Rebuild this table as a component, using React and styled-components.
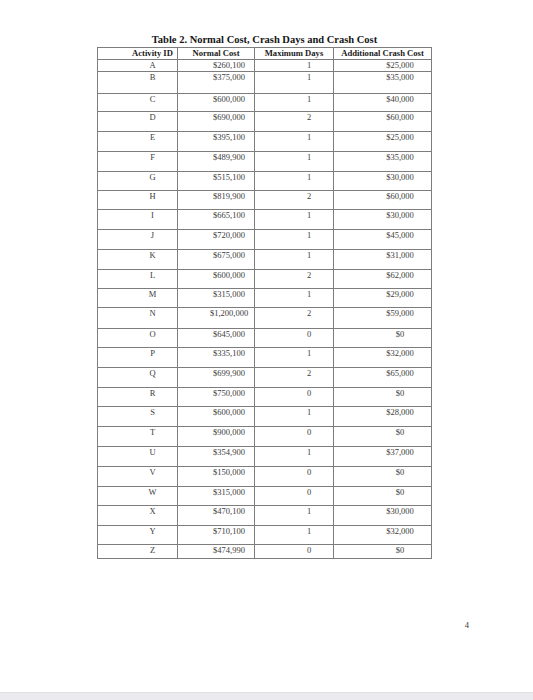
import React from "react";
import styled, { createGlobalStyle } from "styled-components";

const Global = createGlobalStyle`
  html, body { margin: 0; padding: 0; background: #ffffff; }
  #root { width: 533px; }
`;

const Page = styled.div`
  width: 533px;
  min-height: 700px;
  display: flex;
  flex-direction: column;
  background: #ffffff;
  font-family: "Liberation Serif", "Times New Roman", serif;
`;

const Doc = styled.div`
  padding-top: 34px;
  padding-left: 97px;
  width: 335px;
`;

const Title = styled.div`
  text-align: center;
  font-weight: bold;
  font-size: 10.5px;
  line-height: 12px;
  height: 13px;
  color: #151515;
  white-space: nowrap;
`;

const Table = styled.div`
  width: 335px;
  box-sizing: border-box;
  border-left: 1px solid #7d7d7d;
  border-right: 1px solid #7d7d7d;
  border-bottom: 1px solid #7d7d7d;
`;

const Row = styled.div`
  display: grid;
  grid-template-columns: 80px 77px 79px 97px;
  box-sizing: border-box;
  height: ${(p) => p.$h}px;
  border-top: 1px solid #7d7d7d;
`;

const Cell = styled.div`
  box-sizing: border-box;
  border-right: ${(p) => (p.$last ? "none" : "1px solid #7d7d7d")};
  padding-left: ${(p) => p.$pad || 0}px;
  text-align: center;
  white-space: nowrap;
  overflow: visible;
  font-size: ${(p) => (p.$head ? "8.6px" : "8.5px")};
  font-weight: ${(p) => (p.$head ? "bold" : "normal")};
  color: ${(p) => (p.$head ? "#1a1a1a" : "#3c3c3c")};
  line-height: 11px;
`;

const PageNum = styled.div`
  margin-top: 61px;
  padding-right: 64px;
  text-align: right;
  font-size: 8.5px;
  line-height: 10px;
  color: #3a3a3a;
`;

const Spacer = styled.div`
  flex: 1;
`;

const BottomBar = styled.div`
  height: 7px;
  background: #ebebef;
  border-top: 1px solid #dedee2;
`;

const rows = [
  ["A", "$260,100", "1", "$25,000", 12],
  ["B", "$375,000", "1", "$35,000", 22],
  ["C", "$600,000", "1", "$40,000", 18],
  ["D", "$690,000", "2", "$60,000", 20],
  ["E", "$395,100", "1", "$25,000", 20],
  ["F", "$489,900", "1", "$35,000", 20],
  ["G", "$515,100", "1", "$30,000", 19],
  ["H", "$819,900", "2", "$60,000", 19],
  ["I", "$665,100", "1", "$30,000", 20],
  ["J", "$720,000", "1", "$45,000", 20],
  ["K", "$675,000", "1", "$31,000", 20],
  ["L", "$600,000", "2", "$62,000", 19],
  ["M", "$315,000", "1", "$29,000", 19],
  ["N", "$1,200,000", "2", "$59,000", 21],
  ["O", "$645,000", "0", "$0", 19],
  ["P", "$335,100", "1", "$32,000", 20],
  ["Q", "$699,900", "2", "$65,000", 20],
  ["R", "$750,000", "0", "$0", 19],
  ["S", "$600,000", "1", "$28,000", 20],
  ["T", "$900,000", "0", "$0", 20],
  ["U", "$354,900", "1", "$37,000", 20],
  ["V", "$150,000", "0", "$0", 20],
  ["W", "$315,000", "0", "$0", 19],
  ["X", "$470,100", "1", "$30,000", 20],
  ["Y", "$710,100", "1", "$32,000", 19],
  ["Z", "$474,990", "0", "$0", 14],
];

export default function App() {
  return (
    <>
      <Global />
      <Page>
        <Doc>
          <Title>Table 2. Normal Cost, Crash Days and Crash Cost</Title>
          <Table>
            <Row $h={12}>
              <Cell $head $pad={30}>Activity ID</Cell>
              <Cell $head>Normal Cost</Cell>
              <Cell $head>Maximum Days</Cell>
              <Cell $head $last>Additional Crash Cost</Cell>
            </Row>
            {rows.map(([id, cost, days, crash, h]) => (
              <Row key={id} $h={h}>
                <Cell $pad={30}>{id}</Cell>
                <Cell $pad={26}>{cost}</Cell>
                <Cell $pad={30}>{days}</Cell>
                <Cell $pad={35} $last>{crash}</Cell>
              </Row>
            ))}
          </Table>
        </Doc>
        <PageNum>4</PageNum>
        <Spacer />
        <BottomBar />
      </Page>
    </>
  );
}
